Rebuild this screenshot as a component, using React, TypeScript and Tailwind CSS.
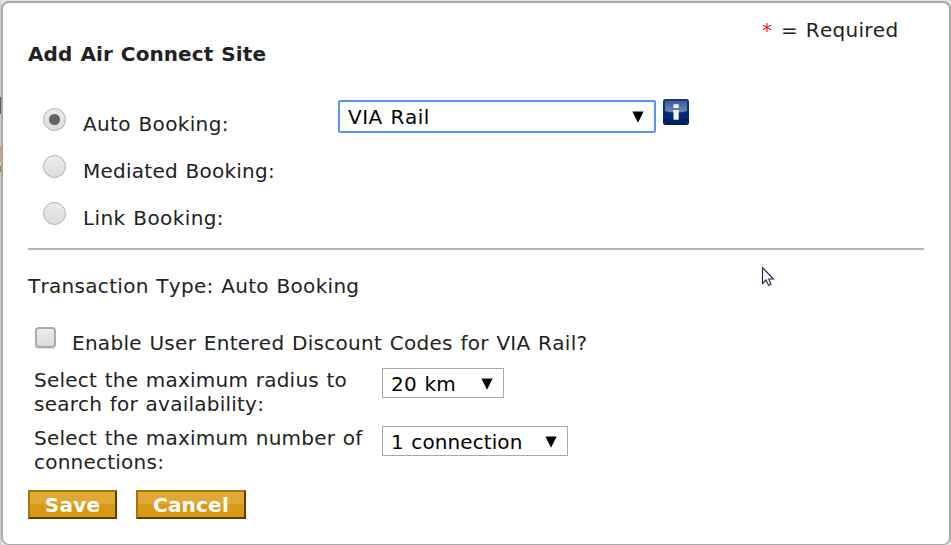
import type { ReactNode } from "react";

function Arrow({ className }: { className: string }) {
  return (
    <svg className={className} width="12" height="12" viewBox="0 0 12 12">
      <path d="M0.4 0.5H11.6L6 11.8Z" fill="#000" />
    </svg>
  );
}

function Select({ className, children }: { className: string; children: ReactNode }) {
  return (
    <div className={`flex shrink-0 justify-between whitespace-nowrap bg-white text-black ${className}`}>
      {children}
    </div>
  );
}

function Radio({ checked = false }: { checked?: boolean }) {
  return (
    <span className="flex size-[23px] shrink-0 items-center justify-center rounded-full border border-[#b0b0b0] bg-linear-to-b from-[#ececec] to-[#dcdcdc]">
      {checked && <span className="size-[11px] rounded-full bg-[#646464]" />}
    </span>
  );
}

function InfoIcon() {
  return (
    <svg className="mt-[-1px] ml-[7px] shrink-0" width="26" height="26" viewBox="0 0 26 26">
      <defs>
        <linearGradient id="gloss" x1="0" y1="0" x2="0" y2="1">
          <stop offset="0" stopColor="#3f5b99" />
          <stop offset="1" stopColor="#7088bb" />
        </linearGradient>
        <linearGradient id="base" x1="0" y1="0" x2="0" y2="1">
          <stop offset="0" stopColor="#17397f" />
          <stop offset="0.5" stopColor="#002f7c" />
          <stop offset="1" stopColor="#001f5c" />
        </linearGradient>
      </defs>
      <rect width="26" height="26" rx="2.5" fill="url(#base)" />
      <path d="M2 3Q2 2 3 2H23Q24 2 24 3V12Q13 15 2 12Z" fill="url(#gloss)" />
      <path d="M10.5 5.2H15.7V9H10.5ZM10 11H15.7V20.7H10.5V12.5H10Z" fill="#f4f6fb" />
    </svg>
  );
}

export default function App() {
  return (
    <div className="flex h-[545px] w-[951px] overflow-hidden bg-[#e3e3e3] pt-px font-['DejaVu_Sans',sans-serif] text-[20px] leading-6 text-[#222] [font-kerning:none] [word-spacing:1px]">
      <div className="flex w-px shrink-0 flex-col bg-[#cfcfcf]">
        <div className="mt-24 h-[17px] bg-[#5b5b5b]" />
        <div className="mt-8 h-4 bg-[#d9a64b]" />
        <div className="mt-1 h-1.5 bg-[#b8800f]" />
      </div>
      <div className="flex h-[544px] w-[950px] shrink-0 flex-col overflow-hidden rounded-[8px] border-2 border-b border-[#a9a9a9] bg-white pl-[25px]">
        <div className="mt-[15px] flex h-6 pl-[734px] whitespace-nowrap">
          <span className="w-[19px] text-[#f02020]">*</span>
          <span className="tracking-[0.3px]">= Required</span>
        </div>
        <h1 className="h-6 whitespace-nowrap text-[20px] leading-6 font-bold tracking-[0.08px]">Add Air Connect Site</h1>

        <div className="mt-[34px] flex h-[47px] items-start pl-[15px]">
          <div className="mt-2"><Radio checked /></div>
          <span className="mt-3 ml-[17px] w-[255px] tracking-[0.35px] whitespace-nowrap">Auto Booking:</span>
          <Select className="h-[33px] w-[318px] rounded-[2px] border-2 border-[#5595f5] pt-[3px] pr-[10px] pl-2">
            <span className="tracking-[0.5px]">VIA Rail</span>
            <Arrow className="mt-[6px]" />
          </Select>
          <InfoIcon />
        </div>
        <div className="flex h-[47px] items-start pl-[15px]">
          <div className="mt-2"><Radio /></div>
          <span className="mt-3 ml-[17px] tracking-[0.25px] whitespace-nowrap">Mediated Booking:</span>
        </div>
        <div className="flex h-[54px] items-start pl-[15px]">
          <div className="mt-2"><Radio /></div>
          <span className="mt-3 ml-[17px] tracking-[0.4px] whitespace-nowrap">Link Booking:</span>
        </div>

        <div className="h-0.5 w-[896px] shrink-0 bg-[#b5b5b5]" />

        <p className="mt-6 h-6 tracking-[0.3px] whitespace-nowrap">Transaction Type: Auto Booking</p>

        <div className="mt-[29px] flex h-[41px] items-start pl-[7px]">
          <span className="size-[21px] shrink-0 rounded-[4px] border-2 border-[#ababab] bg-linear-to-b from-[#ececec] to-[#dadada] shadow-[0_1px_1px_#ddd]" />
          <span className="mt-1 ml-[16px] tracking-[0.28px] whitespace-nowrap">Enable User Entered Discount Codes for VIA Rail?</span>
        </div>

        <div className="flex h-[58px] items-start pl-[6px]">
          <p className="w-[348px] tracking-[0.23px] whitespace-nowrap">
            Select the maximum radius to
            <br />
            search for availability:
          </p>
          <Select className="h-[30px] w-[122px] border border-[#a9a9a9] pt-[3px] pr-[10px] pl-2">
            <span className="tracking-[0.2px]">20 km</span>
            <Arrow className="mt-[6px]" />
          </Select>
        </div>
        <div className="flex h-[58px] items-start pl-[6px]">
          <p className="w-[348px] tracking-[0.23px] whitespace-nowrap">
            Select the maximum number of
            <br />
            connections:
          </p>
          <Select className="h-[30px] w-[186px] border border-[#a9a9a9] pt-[3px] pr-[10px] pl-2">
            <span className="tracking-[0.1px]">1 connection</span>
            <Arrow className="mt-[6px]" />
          </Select>
        </div>

        <div className="mt-[6px] flex gap-[19px] font-bold tracking-[0.2px] text-white">
          <button className="flex h-[29px] w-[89px] items-center justify-center border-2 border-t-[#a87409] border-r-[#5c3d00] border-b-[#5c3d00] border-l-[#a87409] bg-linear-to-b from-[#dfa935] from-50% to-[#d99a15] to-50%">
            Save
          </button>
          <button className="flex h-[29px] w-[110px] items-center justify-center border-2 border-t-[#a87409] border-r-[#5c3d00] border-b-[#5c3d00] border-l-[#a87409] bg-linear-to-b from-[#dfa935] from-50% to-[#d99a15] to-50%">
            Cancel
          </button>
        </div>
      </div>
      <svg className="absolute top-[266px] left-[761px]" width="14" height="21" viewBox="0 0 14 21">
        <path d="M1.5 1.5V17.5L5 14L7.5 19.2L10 18.2L7.8 13H12.5Z" fill="#f3f4fa" stroke="#24243c" strokeWidth="1.1" />
      </svg>
    </div>
  );
}
